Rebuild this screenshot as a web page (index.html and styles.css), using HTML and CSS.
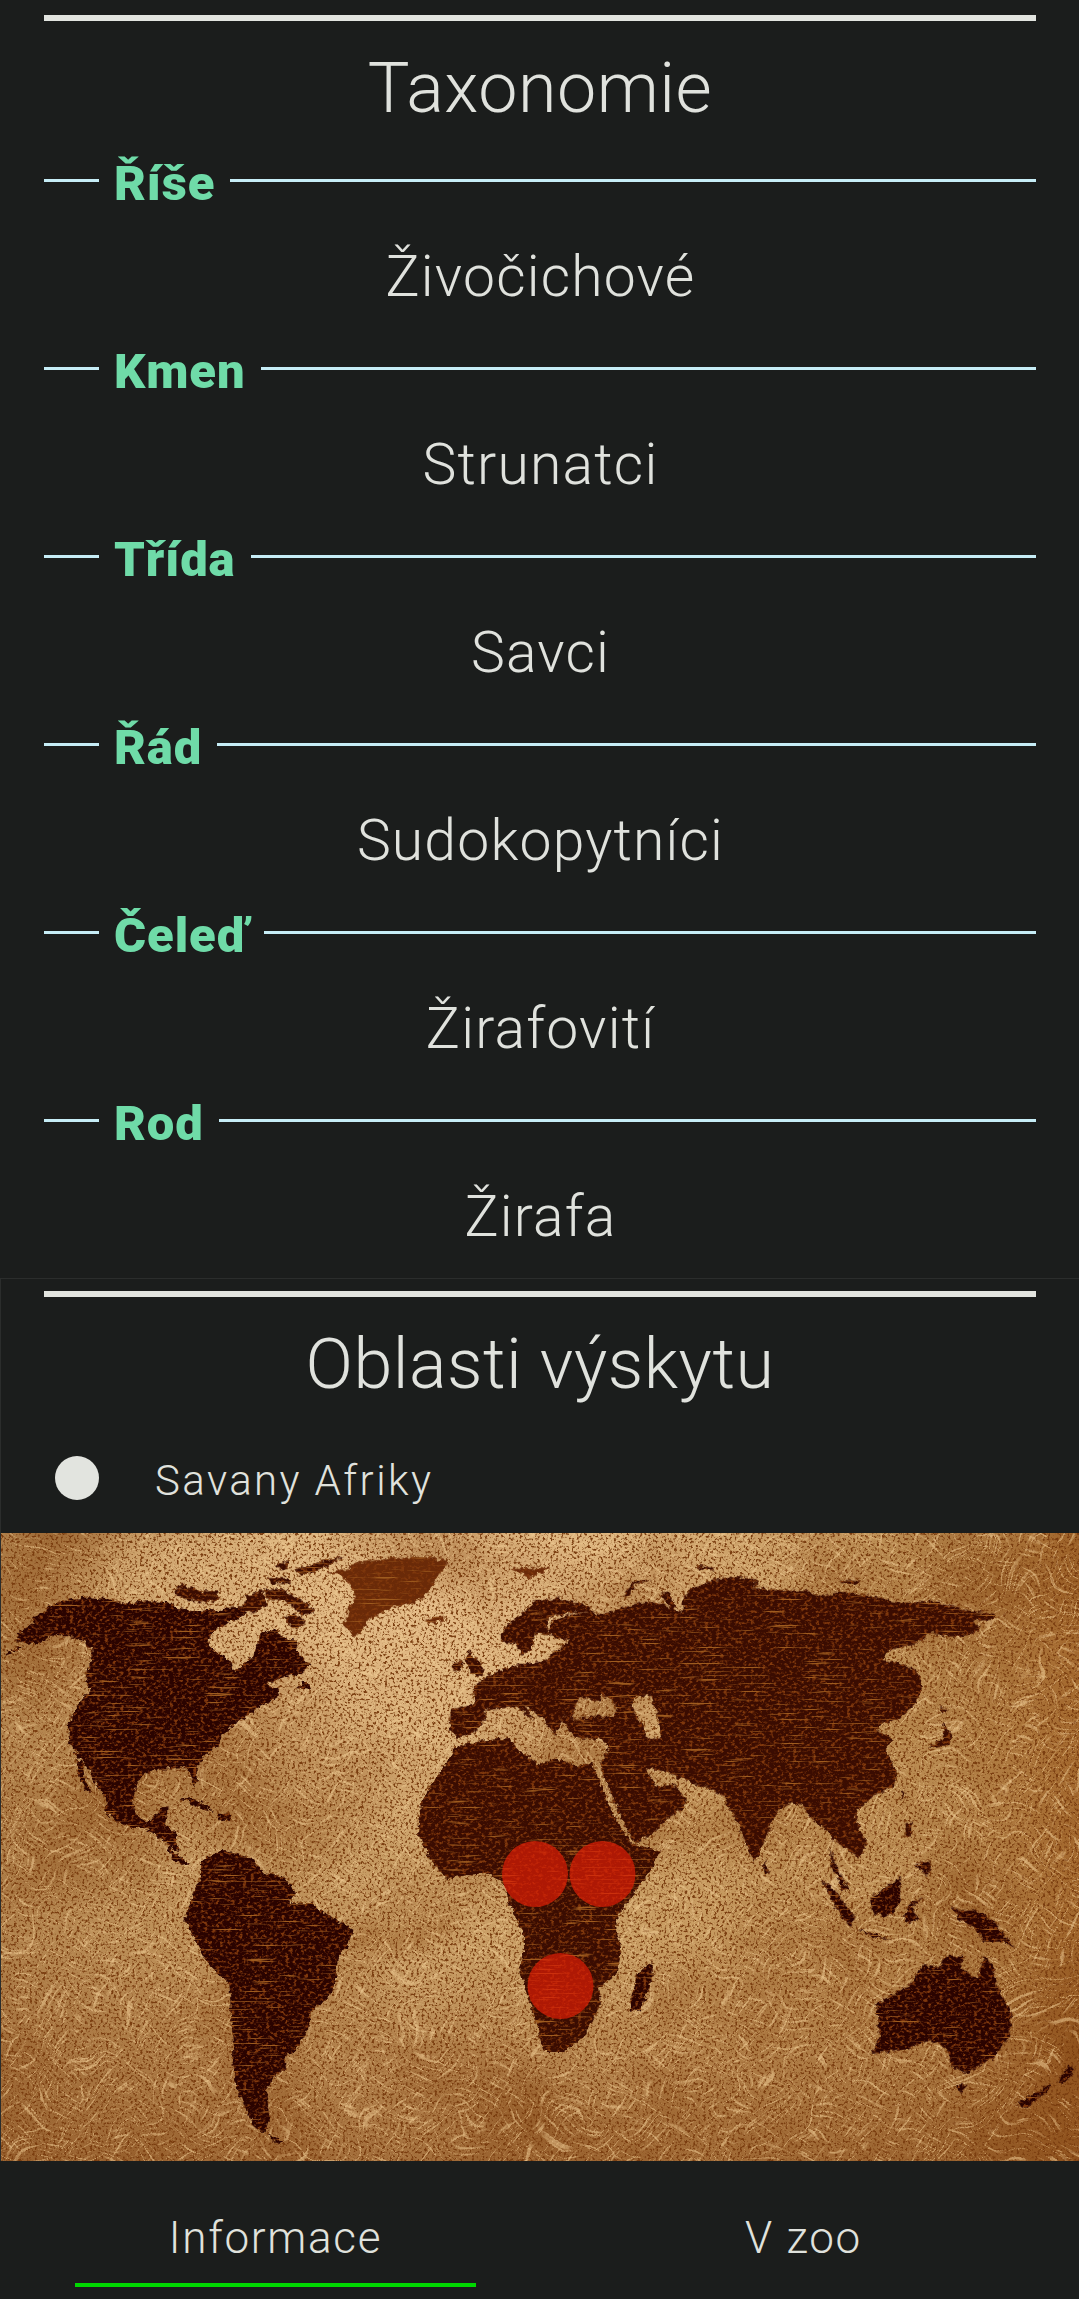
FILE: index.html
```html
<!DOCTYPE html>
<html lang="cs">
<head>
    <meta charset="UTF-8">
    <meta name="viewport" content="width=device-width, initial-scale=1.0">
    <title>Žirafa</title>
    <link rel="stylesheet" href="styles.css">
</head>
<body>
    <section class="taxonomie">
        <div class="pruh"></div>
        <h2 class="nadpis">Taxonomie</h2>

        <div class="stitek"><span class="cara kratka"></span><b>Říše</b><span class="cara"></span></div>
        <p class="hodnota">Živočichové</p>
        <div class="stitek"><span class="cara kratka"></span><b>Kmen</b><span class="cara"></span></div>
        <p class="hodnota">Strunatci</p>
        <div class="stitek"><span class="cara kratka"></span><b>Třída</b><span class="cara"></span></div>
        <p class="hodnota">Savci</p>
        <div class="stitek"><span class="cara kratka"></span><b>Řád</b><span class="cara"></span></div>
        <p class="hodnota">Sudokopytníci</p>
        <div class="stitek"><span class="cara kratka"></span><b>Čeleď</b><span class="cara"></span></div>
        <p class="hodnota">Žirafovití</p>
        <div class="stitek"><span class="cara kratka"></span><b>Rod</b><span class="cara"></span></div>
        <p class="hodnota posledni">Žirafa</p>
    </section>

    <section class="oblasti">
        <div class="okraj">
            <div class="pruh"></div>
            <h2 class="nadpis">Oblasti výskytu</h2>
            <div class="oblast"><span class="tecka"></span><span class="oblast-text">Savany Afriky</span></div>
        </div>

        <svg class="mapa" viewBox="0 0 1078 628" preserveAspectRatio="none" aria-label="Mapa světa">
            <defs>
                <linearGradient id="papirX" x1="0" y1="0" x2="1" y2="0">
                    <stop offset="0" stop-color="#b48650"/>
                    <stop offset=".12" stop-color="#c0945c"/>
                    <stop offset=".4" stop-color="#d0a76e"/>
                    <stop offset=".65" stop-color="#cca166"/>
                    <stop offset=".88" stop-color="#b98a50"/>
                    <stop offset="1" stop-color="#a4692e"/>
                </linearGradient>
                <linearGradient id="papirY" x1="0" y1="0" x2="0" y2="1">
                    <stop offset="0" stop-color="#7a3a0c" stop-opacity="0"/>
                    <stop offset=".65" stop-color="#7a3a0c" stop-opacity=".06"/>
                    <stop offset="1" stop-color="#7a3a0c" stop-opacity=".5"/>
                </linearGradient>
                <radialGradient id="papirSvetlo" cx=".4" cy=".1" r=".42">
                    <stop offset="0" stop-color="#e8c08c" stop-opacity=".95"/>
                    <stop offset="1" stop-color="#e8c08c" stop-opacity="0"/>
                </radialGradient>
                <filter id="zrno" filterUnits="userSpaceOnUse" x="0" y="0" width="1078" height="628" color-interpolation-filters="sRGB">
                    <feTurbulence type="fractalNoise" baseFrequency=".38" numOctaves="3" seed="3"/>
                    <feColorMatrix values="0 0 0 0 .48  0 0 0 0 .24  0 0 0 0 .06  5 0 0 0 -2.55"/>
                </filter>
                <filter id="skvrny" filterUnits="userSpaceOnUse" x="0" y="0" width="1078" height="628" color-interpolation-filters="sRGB">
                    <feTurbulence type="fractalNoise" baseFrequency=".006" numOctaves="2" seed="11"/>
                    <feColorMatrix values="0 0 0 0 .5  0 0 0 0 .26  0 0 0 0 .06  1.4 0 0 0 -.62"/>
                </filter>
                <filter id="vlakna" x="-5%" y="-5%" width="110%" height="110%" color-interpolation-filters="sRGB">
                    <feTurbulence type="fractalNoise" baseFrequency=".03 .6" numOctaves="2" seed="7" result="pruhy"/>
                    <feTurbulence type="fractalNoise" baseFrequency=".015" numOctaves="2" seed="21" result="ohyb"/>
                    <feDisplacementMap in="pruhy" in2="ohyb" scale="55" xChannelSelector="R" yChannelSelector="G"/>
                    <feColorMatrix values="0 0 0 0 .94  0 0 0 0 .8  0 0 0 0 .58  7 0 0 0 -4"/>
                </filter>
                <filter id="rozmaz" filterUnits="userSpaceOnUse" x="300" y="350" width="220" height="110" color-interpolation-filters="sRGB">
                    <feGaussianBlur stdDeviation="8"/>
                </filter>
                <filter id="pevnina" filterUnits="userSpaceOnUse" x="0" y="0" width="1078" height="628" color-interpolation-filters="sRGB">
                    <feTurbulence type="fractalNoise" baseFrequency=".2" numOctaves="2" seed="4" result="okraj"/>
                    <feDisplacementMap in="SourceGraphic" in2="okraj" scale="7" xChannelSelector="R" yChannelSelector="G" result="tvar"/>
                    <feTurbulence type="fractalNoise" baseFrequency=".26 .36" numOctaves="3" seed="9"/>
                    <feColorMatrix values="0 0 0 0 .5  0 0 0 0 .22  0 0 0 0 .05  4 0 0 0 -1.95"/>
                    <feComposite in2="tvar" operator="in" result="zrnko"/>
                    <feTurbulence type="fractalNoise" baseFrequency=".025 .5" numOctaves="2" seed="15"/>
                    <feColorMatrix values="0 0 0 0 .62  0 0 0 0 .36  0 0 0 0 .12  7 0 0 0 -4.5"/>
                    <feComposite in2="tvar" operator="in" result="vlasy"/>
                    <feMerge>
                        <feMergeNode in="tvar"/>
                        <feMergeNode in="zrnko"/>
                        <feMergeNode in="vlasy"/>
                    </feMerge>
                </filter>
            </defs>

            <rect class="papir-x" width="1078" height="628"/>
            <rect class="papir-svetlo" width="1078" height="628"/>
            <rect width="1078" height="628" filter="url(#skvrny)"/>
            <path class="zahyb" filter="url(#rozmaz)" d="M352,398C385,412 420,414 452,386"/>
            <rect class="papir-y" width="1078" height="628"/>
            <rect width="1078" height="628" filter="url(#zrno)"/>
            <rect class="vlakna" x="-150" y="-150" width="1400" height="950" filter="url(#vlakna)" transform="rotate(28 539 314)"/>
            <rect class="vlakna" x="-150" y="-150" width="1400" height="950" filter="url(#vlakna)" transform="rotate(-52 539 314)"/>

            <g filter="url(#pevnina)">
                <!-- severni amerika a gronsko -->
                <g class="zeme-tmava" transform="scale(.3333)">
                    <polygon points="45,325 60,295 100,270 90,250 130,240 150,215 210,198 270,193 330,200 370,212 440,205 500,207 530,225 580,232 640,235 680,225 730,220 740,240 700,262 650,285 625,315 620,335 650,360 690,385 700,420 725,400 760,360 780,300 820,292 860,320 890,325 885,355 925,395 900,420 860,430 800,450 830,470 835,490 800,510 770,525 730,555 690,580 665,610 650,640 610,670 590,700 590,740 580,760 568,720 550,702 510,705 470,708 430,720 405,760 395,800 405,850 440,870 480,825 500,820 495,860 490,880 525,895 530,960 500,930 470,910 430,885 390,885 340,860 310,830 320,800 290,760 270,720 240,680 205,630 200,570 240,500 270,470 255,440 265,400 275,350 250,325 200,310 150,310 110,335 70,330"/>
                    <polygon points="10,362 62,338 66,344 14,368"/>
                    <polygon points="230,680 245,690 250,730 270,780 255,775 235,730"/>
                    <polygon points="885,465 910,445 930,455 925,470"/>
                    <polygon points="535,800 570,795 610,815 640,835 600,825 560,805"/>
                    <polygon points="650,845 690,845 690,860 660,860"/>
                </g>
                <g class="zeme-stredni" transform="scale(.3333)">
                    <polygon points="515,175 550,155 600,175 650,175 655,200 600,210 560,200 525,185"/>
                    <polygon points="790,170 840,165 880,190 920,215 940,240 900,245 860,205 800,195"/>
                    <polygon points="850,250 890,245 915,265 880,285 860,270"/>
                    <polygon points="880,110 930,95 1030,70 980,100 900,130"/>
                    <polygon points="825,95 860,88 860,105 830,105"/>
                    <polygon points="800,135 860,135 870,150 810,150"/>
                    <polygon points="740,190 780,170 800,215 760,240 720,225"/>
                    <polygon class="zeme-svetla" points="975,120 1040,110 1060,90 1180,75 1300,72 1340,88 1310,130 1280,180 1240,210 1170,225 1100,260 1085,295 1060,310 1030,280 1040,230 1065,190 1045,150 1020,125"/>
                </g>

                <!-- eurasie -->
                <g class="zeme-stredni" transform="translate(400 0) scale(.4331 .3333)">
                    <path fill-rule="evenodd" d="M165,465 205,425 255,400 300,390 330,385 345,365 375,340 385,320 350,315 340,290 350,262 395,245 440,235 450,250 520,220 565,205 605,215 635,230 650,240 650,200 665,170 720,140 770,130 825,140 810,165 880,170 940,175 975,190 1015,175 1090,190 1150,210 1230,205 1300,230 1370,245 1365,260 1320,265 1340,290 1290,310 1260,310 1225,300 1190,330 1130,350 1110,380 1150,390 1190,410 1205,460 1190,510 1150,560 1115,570 1095,590 1135,620 1120,650 1145,720 1135,760 1090,790 1055,830 1050,860 1075,930 1060,975 1040,960 1000,920 980,890 950,860 925,815 895,810 860,850 850,890 830,950 815,990 795,930 770,850 745,790 700,760 660,745 620,720 590,710 565,705 590,760 630,755 660,800 650,830 620,850 590,890 545,930 530,915 500,830 465,720 460,690 480,640 465,620 400,612 385,585 370,560 380,540 355,610 330,560 280,510 310,565 270,520 205,530 190,528 200,550 170,600 130,615 112,590 115,530 170,510Z M392,560 410,490 460,505 462,482 500,520 490,550 440,550Z M540,490 575,485 595,560 600,612 570,620 555,570 530,520Z"/>
                    <polygon points="230,310 240,285 270,250 310,205 360,195 420,215 445,235 395,240 345,250 335,285 345,305 310,300 300,350 280,365 265,330 235,330"/>
                    <polygon points="155,350 190,400 185,430 160,420 150,385"/>
                    <polygon points="120,390 145,385 135,415 118,410"/>
                    <polygon points="510,190 540,145 580,140 540,155 525,190"/>
                    <polygon points="600,180 620,175 635,230 625,235"/>
                    <polygon points="680,98 725,105 720,115 685,105"/>
                    <polygon points="1015,140 1060,145 1050,155 1015,150"/>
                    <polygon points="1245,520 1265,530 1250,545"/>
                    <polygon points="1250,565 1275,610 1265,635 1215,645 1250,620 1255,590"/>
                    <polygon points="1155,780 1165,780 1160,800"/>
                    <polygon points="1165,870 1180,870 1180,910 1165,910"/>
                    <polygon points="1190,990 1225,990 1220,1020 1195,1010"/>
                    <polygon class="zeme-svetla" points="55,260 100,245 100,260 75,272"/>
                    <polygon class="zeme-svetla" points="255,105 345,105 300,135"/>
                </g>

                <!-- afrika, body primo v souradnicich mapy -->
                <g class="zeme-stredni">
                    <polygon points="420,270 430,253 456,213 487,207 508,205 517,217 539,232 552,225 573,232 591,230 604,263 621,297 630,310 660,318 643,347 617,382 615,394 620,414 617,440 598,454 600,470 583,504 563,519 543,519 530,474 518,437 523,422 523,404 510,374 503,350 483,340 445,345 430,327 420,307 417,300"/>
                </g>

                <!-- jizni amerika a madagaskar -->
                <g class="zeme-tmava" transform="translate(150 307) scale(.3333)">
                    <polygon points="150,60 215,30 300,55 340,100 400,110 435,160 415,190 480,190 530,225 605,270 590,320 560,350 555,420 535,475 480,510 470,570 430,635 400,650 405,685 370,710 345,750 355,830 345,875 320,875 280,800 250,720 245,600 235,430 170,370 100,240 125,160 150,110"/>
                    <polygon points="350,880 400,905 375,910"/>
                    <polygon points="50,0 70,40 115,70 95,75 60,50"/>
                    <polygon points="1505,365 1505,410 1470,510 1440,515 1440,480 1460,400"/>
                </g>

                <!-- australie a ostrovy -->
                <g class="zeme-tmava" transform="translate(760 307) scale(.3333)">
                    <polygon points="345,490 440,440 490,375 535,385 550,350 605,350 600,385 650,415 670,345 695,380 705,430 750,520 745,590 700,650 620,700 570,680 560,630 510,600 440,625 335,640 355,590"/>
                    <polygon points="770,790 870,730 860,755 790,805"/>
                    <polygon points="890,725 925,675 940,695 905,735"/>
                    <polygon points="585,735 620,730 600,760"/>
                    <polygon points="570,200 600,215 640,210 700,245 730,290 765,325 725,305 670,305 640,265 600,240"/>
                    <polygon points="325,175 420,110 415,190 385,230 340,220"/>
                    <polygon points="180,118 220,150 285,235 270,258 240,230"/>
                    <polygon points="290,270 340,280 385,298 330,290"/>
                    <polygon points="430,240 445,190 490,170 450,200 470,240 440,250"/>
                    <polygon points="205,20 225,80 265,150 245,155 215,80"/>
                    <polygon points="460,75 505,65 495,105"/>
                    <polygon points="10,60 25,100 10,100"/>
                </g>
            </g>

            <g class="vyskyt">
                <circle cx="534" cy="341" r="33"/>
                <circle cx="601.5" cy="341" r="33"/>
                <circle cx="559.5" cy="453" r="33"/>
            </g>
        </svg>
    </section>

    <nav class="zalozky">
        <div class="zalozka aktivni">Informace</div>
        <div class="zalozka">V zoo</div>
    </nav>
</body>
</html>
```
FILE: styles.css
```css
* {
    margin: 0;
    padding: 0;
    box-sizing: border-box;
}

body {
    margin: 0;
    width: 1079px;
    height: 2299px;
    overflow: hidden;
    background-color: #1b1d1c;
    color: #e0e2dd;
    font-family: Roboto, "Noto Sans", sans-serif;
    font-weight: 300;
}

.pruh {
    height: 6px;
    background-color: #e2e4df;
}

.nadpis {
    padding-top: 26px;
    font-size: 70px;
    font-weight: 300;
    line-height: 82px;
    letter-spacing: .5px;
    text-align: center;
}

/* horni cast */
.taxonomie {
    height: 1278px;
    padding: 15px 43px 0 44px;
}

.taxonomie .nadpis {
    padding-bottom: 24px;
}

.stitek {
    display: flex;
    align-items: center;
    gap: 15px;
    height: 60px;
    color: #6fdba8;
    font-size: 49px;
    font-weight: 700;
    letter-spacing: .9px;
}

.cara {
    flex: 1;
    height: 3px;
    margin-bottom: 5px;
    background-color: #c6edf6;
}

.cara.kratka {
    flex: none;
    width: 55px;
}

.hodnota {
    height: 128px;
    padding-left: 1px;
    font-size: 57px;
    line-height: 128px;
    letter-spacing: 1.2px;
    text-align: center;
}

.hodnota.posledni {
    height: 125px;
}

/* oblasti vyskytu */
.oblasti {
    border-top: 1px solid #2b2d2c;
    border-left: 1px solid #2b2d2c;
}

.okraj {
    padding-top: 12px;
}

.okraj .pruh {
    margin: 0 43px;
}

.oblast {
    display: flex;
    align-items: center;
    gap: 56px;
    height: 60px;
    margin: 45px 0 23px;
    padding-left: 54px;
}

.tecka {
    width: 44px;
    height: 44px;
    margin-bottom: 5px;
    border-radius: 50%;
    background-color: #e2e4df;
}

.oblast-text {
    font-size: 42px;
    letter-spacing: 2.4px;
}

.mapa {
    display: block;
    width: 1078px;
    height: 628px;
}

.papir-x {
    fill: url(#papirX);
}

.papir-y {
    fill: url(#papirY);
}

.papir-svetlo {
    fill: url(#papirSvetlo);
}

.zahyb {
    fill: none;
    stroke: #8a4c16;
    stroke-width: 12px;
    opacity: .45;
}

.vlakna {
    opacity: .55;
}

.zeme-tmava {
    fill: #2a0300;
}

.zeme-stredni {
    fill: #3a0c01;
}

.zeme-svetla {
    fill: #6a2a08;
}

.vyskyt circle {
    fill: #e01e06;
    fill-opacity: .7;
}

/* spodni zalozky */
.zalozky {
    display: flex;
    justify-content: space-between;
    padding: 47px 75px 0;
}

.zalozka {
    width: 401px;
    height: 79px;
    font-size: 44px;
    line-height: 60px;
    letter-spacing: 1.7px;
    text-align: center;
}

.zalozka.aktivni {
    border-bottom: 4px solid #00d800;
}
```
